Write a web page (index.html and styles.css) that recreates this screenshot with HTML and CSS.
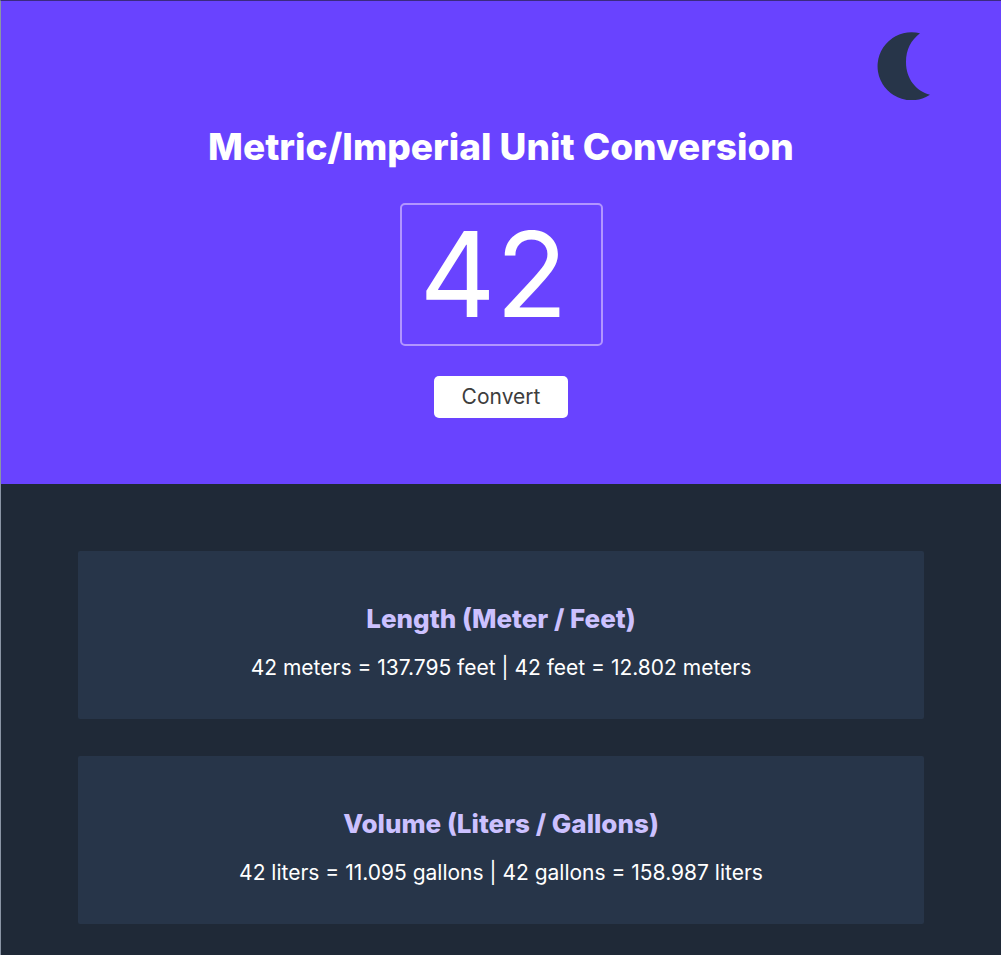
FILE: index.html
```html
<!DOCTYPE html>
<html lang="en">
<head>
<meta charset="utf-8">
<meta name="viewport" content="width=device-width, initial-scale=1">
<title>Metric/Imperial Unit Conversion</title>
<link rel="stylesheet" href="styles.css">
</head>
<body>
<main class="app">
  <header class="hero">
    <button class="theme-toggle" type="button" aria-label="Switch theme">
      <svg class="moon" viewBox="0 0 54 68" aria-hidden="true"><path d="M43 1.3A34 34 0 1 0 53 62.8C39 59 29 47 29 30C29 18 34 8 43 1.3Z"/></svg>
    </button>
    <form class="converter">
      <h1 class="title"><label for="amount">Metric/Imperial Unit Conversion</label></h1>
      <input class="amount" id="amount" type="text" inputmode="numeric" value="42">
      <button class="convert" type="button">Convert</button>
    </form>
  </header>
  <div class="results">
    <section class="card">
      <h2 class="card-title">Length (Meter / Feet)</h2>
      <p class="card-text">42 meters = 137.795 feet | 42 feet = 12.802 meters</p>
    </section>
    <section class="card">
      <h2 class="card-title">Volume (Liters / Gallons)</h2>
      <p class="card-text">42 liters = 11.095 gallons | 42 gallons = 158.987 liters</p>
    </section>
  </div>
</main>
</body>
</html>
```
FILE: styles.css
```css
* {
  box-sizing: border-box;
  margin: 0;
}

body {
  background: #1f2937;
  font-family: Inter, sans-serif;
  font-optical-sizing: none;
}

.app {
  min-height: 100vh;
  border-top: 1px solid #3b2a80;
  border-left: 1px solid #8a95a5;
}

.hero {
  display: flex;
  flex-direction: column;
  padding: 31px 70px 66px;
  background: #6943ff;
}

.theme-toggle {
  align-self: flex-end;
  padding: 0;
  border: 0;
  background: none;
  cursor: pointer;
}

.moon {
  display: block;
  width: 54px;
  height: 68px;
  fill: #273549;
}

.converter {
  display: flex;
  flex-direction: column;
  align-items: center;
  margin-top: 25px;
}

.title {
  color: #fff;
  font-size: 37px;
  line-height: 44px;
  font-weight: 800;
}

.amount {
  width: 203px;
  height: 143px;
  margin-top: 34px;
  padding: 0 18px 2px;
  border: 2px solid #b295ff;
  border-radius: 5px;
  background: transparent;
  color: #fff;
  font-family: inherit;
  font-size: 118px;
}

.convert {
  margin-top: 30px;
  padding: 8px 28px;
  border: 0;
  border-radius: 5px;
  background: #fff;
  color: #3d3d3d;
  font-family: inherit;
  font-size: 21px;
  line-height: 26px;
}

.results {
  display: grid;
  gap: 37px;
  padding: 67px 77px 31px;
}

.card {
  padding: 51px 20px 35px;
  border-radius: 2px;
  background: #273549;
  text-align: center;
}

.card-title {
  color: #ccc1ff;
  font-size: 26px;
  line-height: 34px;
  font-weight: 800;
}

.card-text {
  margin-top: 16px;
  color: #fff;
  font-size: 21px;
  line-height: 32px;
}
```
